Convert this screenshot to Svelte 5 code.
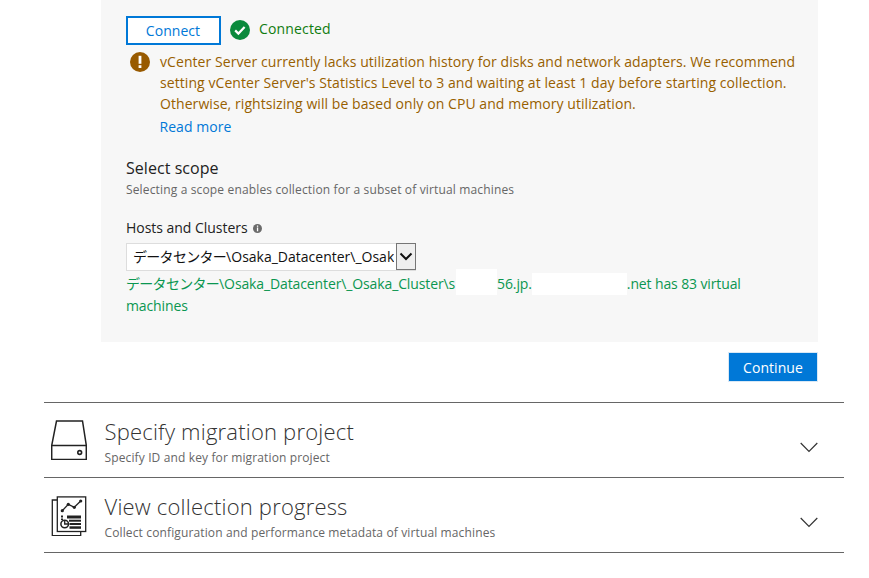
<script>
  const rows = [
    { title: 'Specify migration project', sub: 'Specify ID and key for migration project', icon: 'disk' },
    { title: 'View collection progress', sub: 'Collect configuration and performance metadata of virtual machines', icon: 'report' }
  ];
</script>

<div class="page">
  <section class="panel">
    <div class="connect-row">
      <button class="connect">Connect</button>
      <svg class="status-icon" viewBox="0 0 20 20" width="20" height="20" aria-hidden="true">
        <circle cx="10" cy="10" r="10" fill="#0a8a3c" />
        <path d="M5.2 10.4l3.2 3.2 6.2-6.6" fill="none" stroke="#fff" stroke-width="2.2" />
      </svg>
      <span class="connected">Connected</span>
    </div>
    <div class="warning">
      <svg class="warn-icon" viewBox="0 0 20 20" width="20" height="20" aria-hidden="true">
        <circle cx="10" cy="10" r="10" fill="#985a00" />
        <rect x="8.6" y="3.8" width="2.8" height="8" fill="#fff" />
        <rect x="8.6" y="13.2" width="2.8" height="2.8" fill="#fff" />
      </svg>
      <div class="warn-body">
        <p class="warn-text">vCenter Server currently lacks utilization history for disks and network adapters. We recommend<br />setting vCenter Server's Statistics Level to 3 and waiting at least 1 day before starting collection.<br />Otherwise, rightsizing will be based only on CPU and memory utilization.</p>
        <a class="more" href="#more">Read more</a>
      </div>
    </div>
    <h3 class="scope">Select scope</h3>
    <p class="scope-sub">Selecting a scope enables collection for a subset of virtual machines</p>
    <div class="label">
      Hosts and Clusters
      <svg viewBox="0 0 9 9" width="9" height="9" aria-hidden="true">
        <circle cx="4.5" cy="4.5" r="4.5" fill="#6b6b6b" />
        <rect x="3.9" y="1.5" width="1.3" height="1.3" fill="#fff" />
        <rect x="3.9" y="3.5" width="1.3" height="3.8" fill="#fff" />
      </svg>
    </div>
    <div class="select">
      <span class="select-value"><span class="cjk">データセンター</span>\Osaka_Datacenter\_Osaka_Cluster</span>
      <span class="select-arrow">
        <svg viewBox="0 0 14 9" width="14" height="9" aria-hidden="true">
          <path d="M1.500 1.500L7 7l5.500-5.500" fill="none" stroke="#111" stroke-width="2" />
        </svg>
      </span>
    </div>
    <p class="result"><span class="cjk">データセンター</span>\Osaka_Datacenter\_Osaka_Cluster\s<span class="mask one"></span>56.jp.<span class="mask two"></span>.net has 83 virtual machines</p>
  </section>

  <div class="actions"><button class="continue">Continue</button></div>

  <div class="rows">
    {#each rows as row}
      <div class="row">
        <span class="row-icon">
          {#if row.icon === 'disk'}
            <svg viewBox="0 0 36 40" width="36" height="40" aria-hidden="true" fill="none" stroke="#222" stroke-width="1.500">
              <path d="M5.500 1h26L35.300 25.500v14H.7v-14z" />
              <path d="M.7 25.500h34.600" />
              <circle cx="28.700" cy="32.500" r="1.900" stroke-width="1.600" />
            </svg>
          {:else}
            <svg viewBox="0 0 36 42" width="36" height="42" aria-hidden="true" fill="none" stroke="#222" stroke-width="1.300">
              <path d="M6.300 6H1.300v35.700h28.400v-4" />
              <rect x="6.300" y="2.900" width="28.400" height="34.600" fill="#fff" />
              <path d="M11.300 16.700l6-6.400 6 3 6.400-6.300" />
              <g fill="#222" stroke="none">
                <circle cx="11.300" cy="16.700" r="1.600" /><circle cx="17.300" cy="10.300" r="1.600" /><circle cx="23.300" cy="13.300" r="1.600" /><circle cx="29.700" cy="7" r="1.600" />
                <rect x="16" y="21.500" width="14" height="3" /><rect x="18" y="25.700" width="12" height="2" /><rect x="18.500" y="29" width="11.500" height="2" /><rect x="18.500" y="32.300" width="11.500" height="2.500" />
                <rect x="10" y="21.500" width="2" height="2" /><rect x="10" y="24.500" width="2" height="1.500" />
              </g>
              <circle cx="13.700" cy="30" r="3.800" stroke-width="1.500" />
              <path d="M13.700 26.500V30h3.500" />
            </svg>
          {/if}
        </span>
        <div class="row-text">
          <div class="row-title">{row.title}</div>
          <div class="row-sub">{row.sub}</div>
        </div>
        <svg class="chev" viewBox="0 0 18 11" width="18" height="11" aria-hidden="true">
          <path d="M.7 1l8.300 8.300L17.300 1" fill="none" stroke="#333" stroke-width="1.200" />
        </svg>
      </div>
    {/each}
  </div>
</div>

<style>
  :global(body) {
    margin: 0;
    background: #fff;
    font-family: "Open Sans", "Noto Sans CJK JP", sans-serif;
  }
  .page {
    width: 869px;
    height: 578px;
    overflow: hidden;
    box-sizing: border-box;
    padding-left: 44px;
  }
  .panel {
    box-sizing: border-box;
    width: 717px;
    height: 342px;
    margin-left: 57px;
    padding: 16px 0 0 25px;
    background: #f7f7f7;
  }
  .connect-row {
    display: flex;
    align-items: center;
    height: 29px;
  }
  .connect {
    box-sizing: border-box;
    width: 95px;
    height: 29px;
    padding: 0 1px 0 0;
    border: 2px solid #0078d7;
    background: #fff;
    color: #0078d7;
    font: 14px/25px "Open Sans", sans-serif;
    letter-spacing: 0.05px;
  }
  .status-icon {
    margin: -2px 0 0 9px;
  }
  .connected {
    margin: -5px 0 0 9px;
    color: #107c10;
    font-size: 14px;
    letter-spacing: 0.15px;
  }
  .warning {
    display: flex;
    margin: 6px 0 0 4px;
  }
  .warn-icon {
    flex: none;
    margin-top: 1px;
  }
  .warn-body {
    margin-left: 10px;
  }
  .warn-text {
    margin: 0;
    color: #986000;
    font-size: 14px;
    line-height: 21px;
    letter-spacing: 0.07px;
    white-space: nowrap;
  }
  .more {
    display: block;
    margin: 2px 0 0 -0.5px;
    color: #0078d7;
    font-size: 14px;
    line-height: 21px;
    letter-spacing: 0.05px;
    text-decoration: none;
  }
  .scope {
    margin: 20px 0 0;
    color: #222;
    font-size: 16px;
    font-weight: 400;
    line-height: 22px;
    letter-spacing: 0.05px;
  }
  .scope-sub {
    margin: 2px 0 0;
    color: #666;
    font-size: 12px;
    line-height: 17px;
    letter-spacing: 0.15px;
  }
  .label {
    display: flex;
    align-items: center;
    gap: 5px;
    margin-top: 20px;
    color: #222;
    font-size: 14px;
    line-height: 20px;
    letter-spacing: -0.03px;
  }
  .select {
    display: flex;
    box-sizing: border-box;
    width: 290px;
    height: 28px;
    margin-top: 5px;
    border: 1px solid #ddd;
    background: #fff;
  }
  .select-value {
    flex: 1;
    min-width: 0;
    overflow: hidden;
    margin-right: 2px;
    padding-left: 6px;
    color: #111;
    font-size: 14px;
    line-height: 26px;
    white-space: nowrap;
  }
  .select-arrow {
    display: flex;
    flex: none;
    align-items: center;
    justify-content: center;
    box-sizing: border-box;
    width: 20px;
    height: 27px;
    margin: -1px -1px 0 0;
    border: 1px solid #767676;
    background: #efefef;
  }
  .cjk {
    letter-spacing: -0.7px;
  }
  .result {
    width: 640px;
    margin: 2px 0 0;
    color: #0a9650;
    font-size: 14px;
    line-height: 22px;
    letter-spacing: -0.12px;
  }
  .mask {
    display: inline-block;
    background: #fff;
    vertical-align: -6px;
  }
  .mask.one {
    width: 41px;
    height: 26px;
    margin: -8px 0 0 1px;
  }
  .mask.two {
    width: 95px;
    height: 22px;
  }
  .actions {
    display: flex;
    justify-content: flex-end;
    width: 774px;
    margin-top: 10px;
  }
  .continue {
    box-sizing: border-box;
    width: 90px;
    height: 30px;
    padding: 2px 0 0;
    border: 1px solid #d9e8f5;
    background: #0078d7;
    color: #fff;
    font: 14px/24px "Open Sans", sans-serif;
    letter-spacing: 0.05px;
  }
  .rows {
    width: 800px;
    margin-top: 20px;
    border-top: 1px solid #666;
  }
  .row {
    display: flex;
    align-items: center;
    box-sizing: border-box;
    height: 75px;
    border-bottom: 1px solid #666;
  }
  .row-icon {
    display: flex;
    flex: none;
    width: 36px;
    margin-left: 7px;
  }
  .row-text {
    flex: 1;
    margin-left: 17.500px;
    padding-top: 1px;
  }
  .row-title {
    color: #333;
    font-size: 22px;
    font-weight: 300;
    line-height: 30px;
    letter-spacing: 0.2px;
  }
  .row-sub {
    margin-top: 3px;
    color: #666;
    font-size: 12px;
    line-height: 17px;
    letter-spacing: 0.13px;
  }
  .chev {
    flex: none;
    margin: 14px 26px 0 0;
  }
</style>
